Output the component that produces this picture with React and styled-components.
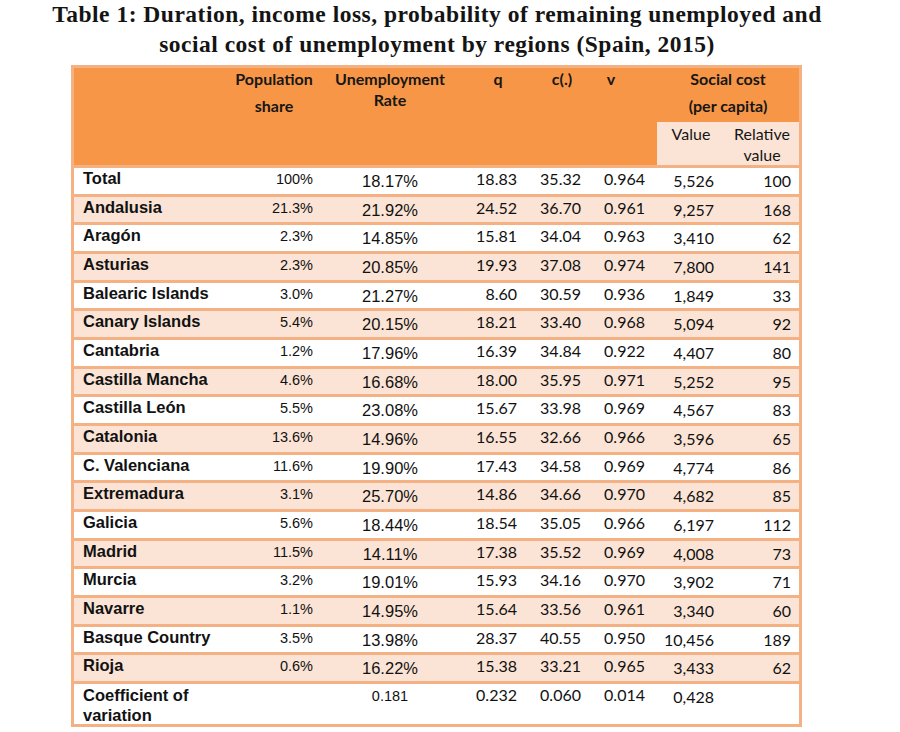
import React from 'react'
import styled, { createGlobalStyle } from 'styled-components'

const GlobalStyle = createGlobalStyle`
  html, body {
    margin: 0;
    padding: 0;
    background: #ffffff;
  }
  body {
    font-family: 'Liberation Sans', Arial, sans-serif;
    color: #111111;
  }
`

const ORANGE = '#F79646'
const LINE = '#F4B183'
const PEACH = '#FBE4D5'

const COLS = '151px 95px 140px 62px 64px 71px 68px 74px'

const Page = styled.div`
  width: 874px;
  padding: 4px 0;
`

const Title = styled.h1`
  margin: 0;
  font-family: 'Liberation Serif', 'Times New Roman', serif;
  font-weight: 700;
  font-size: 23.5px;
  letter-spacing: 0.5px;
  text-align: center;
  color: #141414;
`

const TitleLine = styled.span`
  display: block;
  line-height: 20px;
  margin-top: ${p => p.$gap || 0}px;
`

const Table = styled.div`
  margin: 11px 0 0 71px;
  width: 725px;
  border: 3px solid ${LINE};
`

const Head = styled.div`
  display: grid;
  grid-template-columns: ${COLS};
  grid-template-rows: 54px 43px;
  background: ${ORANGE};
  font-family: Lato, 'Open Sans', sans-serif;
  font-size: 16px;
  color: #161616;
`

const HeadCell = styled.div`
  grid-row: ${p => p.$row || '1 / span 2'};
  grid-column: ${p => p.$col || 'auto'};
  text-align: center;
  font-weight: ${p => (p.$light ? 400 : 700)};
  padding-left: ${p => p.$pl || 0}px;
  padding-right: ${p => p.$pr || 0}px;
  padding-top: ${p => p.$pt || 0}px;
  background: ${p => (p.$sub ? PEACH : 'transparent')};
`

const HeadLine = styled.span`
  display: block;
  line-height: 21px;
  margin-top: ${p => p.$gap || 0}px;
`

const Row = styled.div`
  display: grid;
  grid-template-columns: ${COLS};
  height: ${p => (p.$tall ? 40 : 25.67)}px;
  border-top: 3px solid ${LINE};
  background: ${p => (p.$shade ? PEACH : '#ffffff')};
  align-items: start;
`

const Label = styled.div`
  padding: ${p => (p.$tall ? 1 : 0)}px 0 0 9px;
  font-family: 'Liberation Sans', Arial, sans-serif;
  font-weight: 700;
  font-size: 16.5px;
  line-height: 20px;
  color: #121212;
`

const Share = styled.div`
  padding: 1px 7px 0 0;
  text-align: right;
  font-family: 'Liberation Sans', Arial, sans-serif;
  font-size: 14.5px;
  line-height: 20px;
`

const Rate = styled.div`
  padding-top: ${p => (p.$tall ? 2 : 3)}px;
  text-align: center;
  font-family: 'Liberation Sans', Arial, sans-serif;
  font-size: ${p => (p.$tall ? 14.5 : 16.5)}px;
  line-height: 20px;
`

const Num = styled.div`
  padding-top: ${p => p.$pt || 0}px;
  padding-right: ${p => p.$pr}px;
  text-align: right;
  font-family: Lato, 'Open Sans', sans-serif;
  font-size: 16px;
  line-height: 22px;
`

const rows = [
  ['Total', '100%', '18.17%', '18.83', '35.32', '0.964', '5,526', '100'],
  ['Andalusia', '21.3%', '21.92%', '24.52', '36.70', '0.961', '9,257', '168'],
  ['Aragón', '2.3%', '14.85%', '15.81', '34.04', '0.963', '3,410', '62'],
  ['Asturias', '2.3%', '20.85%', '19.93', '37.08', '0.974', '7,800', '141'],
  ['Balearic Islands', '3.0%', '21.27%', '8.60', '30.59', '0.936', '1,849', '33'],
  ['Canary Islands', '5.4%', '20.15%', '18.21', '33.40', '0.968', '5,094', '92'],
  ['Cantabria', '1.2%', '17.96%', '16.39', '34.84', '0.922', '4,407', '80'],
  ['Castilla Mancha', '4.6%', '16.68%', '18.00', '35.95', '0.971', '5,252', '95'],
  ['Castilla León', '5.5%', '23.08%', '15.67', '33.98', '0.969', '4,567', '83'],
  ['Catalonia', '13.6%', '14.96%', '16.55', '32.66', '0.966', '3,596', '65'],
  ['C. Valenciana', '11.6%', '19.90%', '17.43', '34.58', '0.969', '4,774', '86'],
  ['Extremadura', '3.1%', '25.70%', '14.86', '34.66', '0.970', '4,682', '85'],
  ['Galicia', '5.6%', '18.44%', '18.54', '35.05', '0.966', '6,197', '112'],
  ['Madrid', '11.5%', '14.11%', '17.38', '35.52', '0.969', '4,008', '73'],
  ['Murcia', '3.2%', '19.01%', '15.93', '34.16', '0.970', '3,902', '71'],
  ['Navarre', '1.1%', '14.95%', '15.64', '33.56', '0.961', '3,340', '60'],
  ['Basque Country', '3.5%', '13.98%', '28.37', '40.55', '0.950', '10,456', '189'],
  ['Rioja', '0.6%', '16.22%', '15.38', '33.21', '0.965', '3,433', '62'],
]

const DataRow = ({ cells, shade, tall }) => {
  const [name, share, rate, q, c, v, value, rel] = cells
  return (
    <Row $shade={shade} $tall={tall}>
      <Label $tall={tall}>{name}</Label>
      <Share>{share}</Share>
      <Rate $tall={tall}>{rate}</Rate>
      <Num $pr={5}>{q}</Num>
      <Num $pr={5}>{c}</Num>
      <Num $pr={12}>{v}</Num>
      <Num $pr={11} $pt={2}>{value}</Num>
      <Num $pr={8} $pt={2}>{rel}</Num>
    </Row>
  )
}

export default function App() {
  return (
    <Page>
      <GlobalStyle />
      <Title>
        <TitleLine>Table 1: Duration, income loss, probability of remaining unemployed and</TitleLine>
        <TitleLine $gap={10}>social cost of unemployment by regions (Spain, 2015)</TitleLine>
      </Title>
      <Table>
        <Head>
          <HeadCell $col="1" />
          <HeadCell $col="2" $pl={3}>
            <HeadLine>Population</HeadLine>
            <HeadLine $gap={6}>share</HeadLine>
          </HeadCell>
          <HeadCell $col="3">
            <HeadLine>Unemployment</HeadLine>
            <HeadLine>Rate</HeadLine>
          </HeadCell>
          <HeadCell $col="4" $pl={14}>
            <HeadLine>q</HeadLine>
          </HeadCell>
          <HeadCell $col="5" $pl={16}>
            <HeadLine>c(.)</HeadLine>
          </HeadCell>
          <HeadCell $col="6" $pr={21}>
            <HeadLine>v</HeadLine>
          </HeadCell>
          <HeadCell $col="7 / span 2" $row="1">
            <HeadLine>Social cost</HeadLine>
            <HeadLine $gap={6}>(per capita)</HeadLine>
          </HeadCell>
          <HeadCell $col="7" $row="2" $light $sub $pt={1}>
            <HeadLine>Value</HeadLine>
          </HeadCell>
          <HeadCell $col="8" $row="2" $light $sub $pt={1}>
            <HeadLine>Relative</HeadLine>
            <HeadLine>value</HeadLine>
          </HeadCell>
        </Head>
        {rows.map((r, i) => (
          <DataRow key={r[0]} cells={r} shade={i % 2 === 1} />
        ))}
        <DataRow
          tall
          cells={[
            <>Coefficient of<br />variation</>,
            '',
            '0.181',
            '0.232',
            '0.060',
            '0.014',
            '0,428',
            '',
          ]}
        />
      </Table>
    </Page>
  )
}
